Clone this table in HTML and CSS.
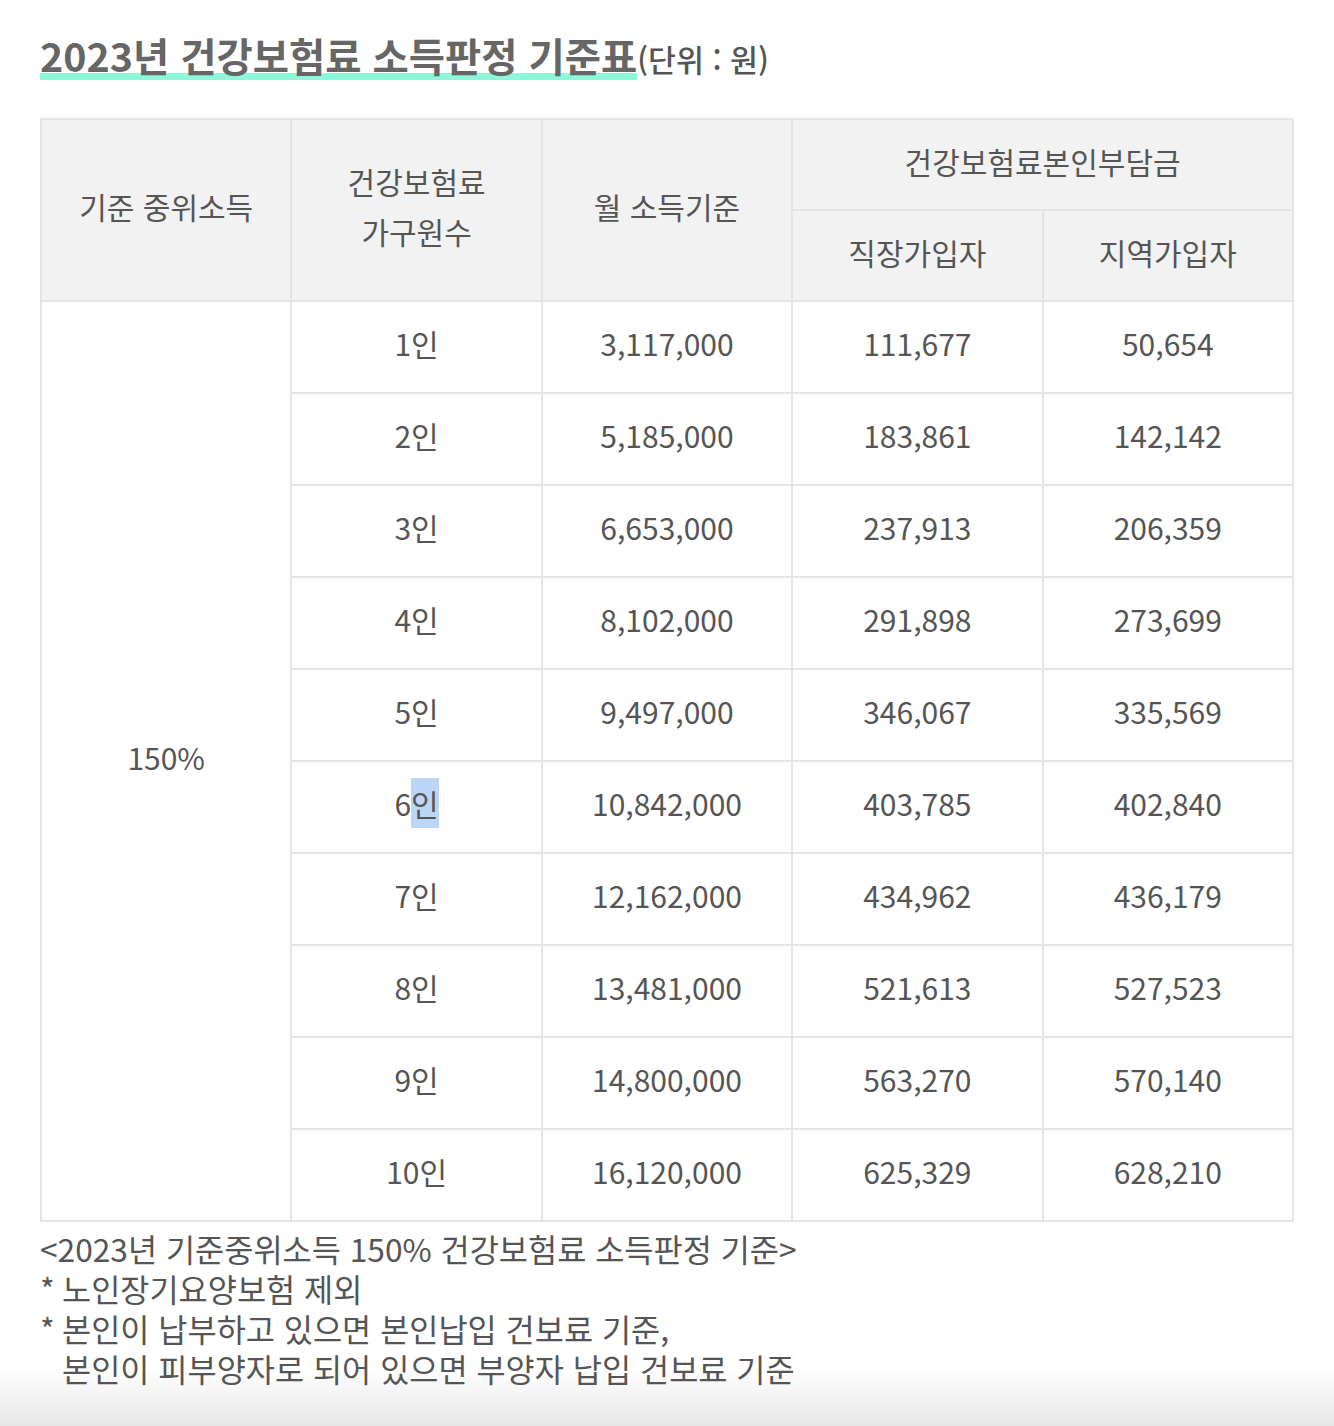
FILE: index.html
```html
<!DOCTYPE html>
<html lang="ko">
<head>
<meta charset="utf-8">
<link rel="stylesheet" href="styles.css">
</head>
<body>
<div class="page">
  <h2 class="title"><span class="title-main">2023년 건강보험료 소득판정 기준표</span><span class="title-unit">(단위 : 원)</span></h2>
  <table class="table">
    <colgroup><col><col><col><col><col></colgroup>
    <thead>
      <tr>
        <th rowspan="2">기준 중위소득</th>
        <th rowspan="2">건강보험료<br>가구원수</th>
        <th rowspan="2">월 소득기준</th>
        <th colspan="2">건강보험료본인부담금</th>
      </tr>
      <tr>
        <th>직장가입자</th>
        <th>지역가입자</th>
      </tr>
    </thead>
    <tbody>
      <tr><td rowspan="10">150%</td><td>1인</td><td>3,117,000</td><td>111,677</td><td>50,654</td></tr>
      <tr><td>2인</td><td>5,185,000</td><td>183,861</td><td>142,142</td></tr>
      <tr><td>3인</td><td>6,653,000</td><td>237,913</td><td>206,359</td></tr>
      <tr><td>4인</td><td>8,102,000</td><td>291,898</td><td>273,699</td></tr>
      <tr><td>5인</td><td>9,497,000</td><td>346,067</td><td>335,569</td></tr>
      <tr><td>6<span class="sel">인</span></td><td>10,842,000</td><td>403,785</td><td>402,840</td></tr>
      <tr><td>7인</td><td>12,162,000</td><td>434,962</td><td>436,179</td></tr>
      <tr><td>8인</td><td>13,481,000</td><td>521,613</td><td>527,523</td></tr>
      <tr><td>9인</td><td>14,800,000</td><td>563,270</td><td>570,140</td></tr>
      <tr><td>10인</td><td>16,120,000</td><td>625,329</td><td>628,210</td></tr>
    </tbody>
  </table>
  <div class="notes">
    <p class="note">&lt;2023년 기준중위소득 150% 건강보험료 소득판정 기준&gt;</p>
    <p class="note"><span class="star">*</span>노인장기요양보험 제외</p>
    <p class="note"><span class="star">*</span>본인이 납부하고 있으면 본인납입 건보료 기준,<br><span class="star"></span>본인이 피부양자로 되어 있으면 부양자 납입 건보료 기준</p>
  </div>
</div>
</body>
</html>
```

FILE: styles.css
```css
html, body {
  margin: 0;
  padding: 0;
}
html {
  min-height: 1426px;
  background: linear-gradient(to bottom, #ffffff 0, #ffffff 1368px, #e6e6e6 1426px);
}
body {
  font-family: "Noto Sans CJK KR", "Noto Sans", sans-serif;
  color: #555;
}
.page {
  padding: 28px 40px 0 40px;
}
.title {
  margin: 0;
  height: 54px;
  font-size: 39.4px;
  line-height: 54px;
  font-weight: 700;
  color: #666;
  letter-spacing: 0;
}
.title-main {
  background: linear-gradient(to bottom, transparent 0, transparent 47px, #8cf8da 47px, #8cf8da 54px, transparent 54px);
}
.title-unit {
  font-size: 30.4px;
  font-weight: 500;
  color: #555;
}
.table {
  margin-top: 36px;
  width: 1254px;
  table-layout: fixed;
  border-collapse: collapse;
  border: 2px solid #e5e5e5;
}
.table th, .table td {
  border: 2px solid #e5e5e5;
  padding: 0 0 8px 0;
  height: 82px;
  text-align: center;
  vertical-align: middle;
  font-size: 30px;
  line-height: 50px;
  color: #555;
}
.table th {
  height: 81px;
  background: #f2f2f2;
  font-weight: 400;
}
.sel {
  display: inline-block;
  background: #bcd6f8;
  line-height: 50px;
}
.notes {
  margin-top: 6px;
}
.note {
  margin: 0;
  font-size: 31.7px;
  line-height: 40px;
  color: #555;
}
.star {
  display: inline-block;
  width: 22px;
}
```
